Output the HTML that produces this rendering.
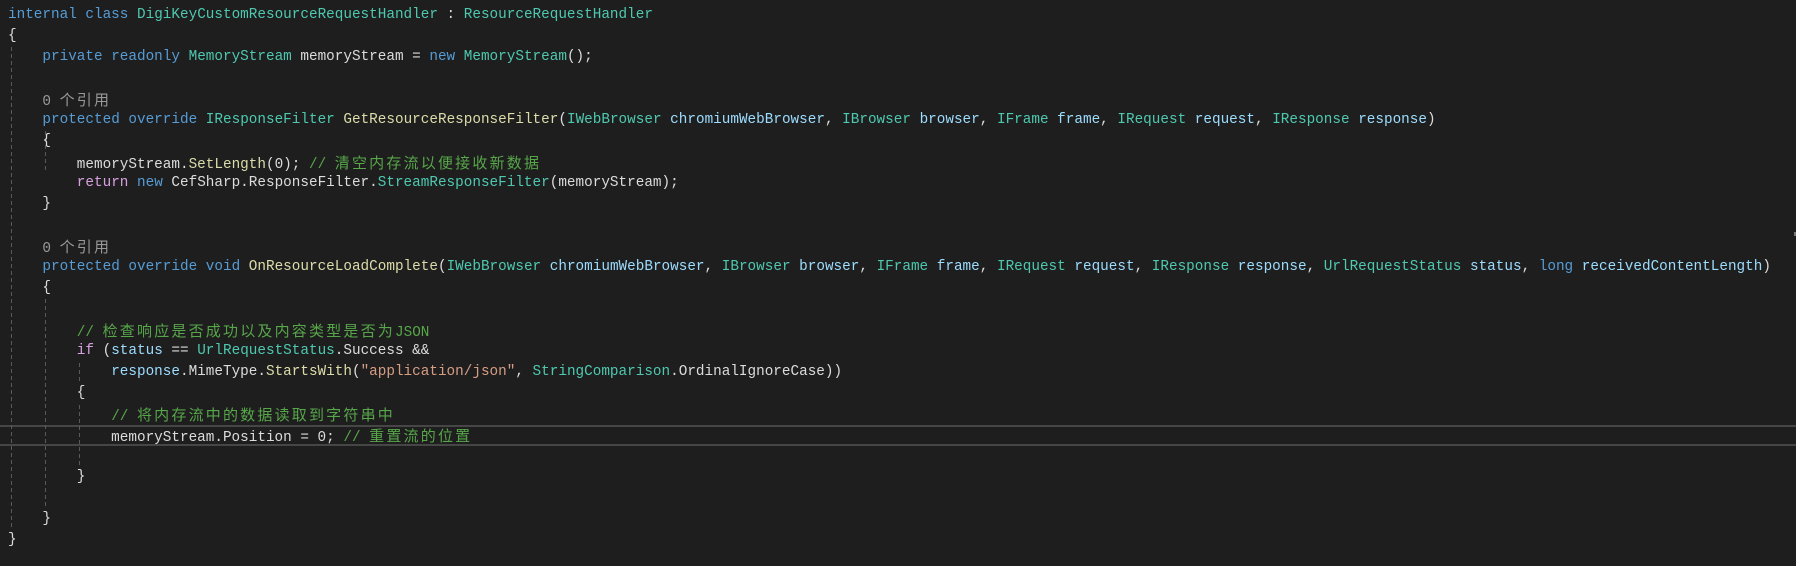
<!DOCTYPE html>
<html><head><meta charset="utf-8"><style>
html,body{margin:0;padding:0;background:#1e1e1e;width:1796px;height:566px;overflow:hidden;position:relative}
.l{position:absolute;left:8px;height:21px;line-height:21px;white-space:pre;font-family:"Liberation Mono","Noto Sans CJK SC",monospace;font-size:14.33px;color:#dcdcdc}
.c{font-family:"Noto Sans CJK SC","WenQuanYi Zen Hei",sans-serif;font-size:15px;letter-spacing:2.2px}
.k{color:#569cd6}.t{color:#4ec9b0}.m{color:#dcdcaa}.p{color:#9cdcfe}.g{color:#57a64a}.s{color:#d69d85}.f{color:#d8a0df}.r{color:#999999}
.gd{position:absolute;width:1px;background:repeating-linear-gradient(to bottom,#5a5a5a 0 4px,transparent 4px 7px)}
.hl{position:absolute;left:0;width:1796px;top:425px;height:17px;border-top:2px solid #464646;border-bottom:2px solid #464646}
</style></head><body>
<div class="hl"></div>
<div class="gd" style="left:11px;top:47px;height:480px"></div>
<div class="gd" style="left:45px;top:131px;height:42px"></div>
<div class="gd" style="left:45px;top:299px;height:210px"></div>
<div class="gd" style="left:79px;top:363px;height:20px"></div>
<div class="gd" style="left:79px;top:405px;height:62px"></div>
<div style="position:absolute;left:1794px;top:232px;width:2px;height:4px;background:#777"></div>

<div class="l" style="top:5px"><span class="k">internal class</span> <span class="t">DigiKeyCustomResourceRequestHandler</span> : <span class="t">ResourceRequestHandler</span></div>
<div class="l" style="top:26px">{</div>
<div class="l" style="top:47px">    <span class="k">private readonly</span> <span class="t">MemoryStream</span> memoryStream = <span class="k">new</span> <span class="t">MemoryStream</span>();</div>
<div class="l r" style="top:89px">    0 <span class="c">个引用</span></div>
<div class="l" style="top:110px">    <span class="k">protected override</span> <span class="t">IResponseFilter</span> <span class="m">GetResourceResponseFilter</span>(<span class="t">IWebBrowser</span> <span class="p">chromiumWebBrowser</span>, <span class="t">IBrowser</span> <span class="p">browser</span>, <span class="t">IFrame</span> <span class="p">frame</span>, <span class="t">IRequest</span> <span class="p">request</span>, <span class="t">IResponse</span> <span class="p">response</span>)</div>
<div class="l" style="top:131px">    {</div>
<div class="l" style="top:152px">        memoryStream.<span class="m">SetLength</span>(0); <span class="g">// <span class="c">清空内存流以便接收新数据</span></span></div>
<div class="l" style="top:173px">        <span class="f">return</span> <span class="k">new</span> CefSharp.ResponseFilter.<span class="t">StreamResponseFilter</span>(memoryStream);</div>
<div class="l" style="top:194px">    }</div>
<div class="l r" style="top:236px">    0 <span class="c">个引用</span></div>
<div class="l" style="top:257px">    <span class="k">protected override void</span> <span class="m">OnResourceLoadComplete</span>(<span class="t">IWebBrowser</span> <span class="p">chromiumWebBrowser</span>, <span class="t">IBrowser</span> <span class="p">browser</span>, <span class="t">IFrame</span> <span class="p">frame</span>, <span class="t">IRequest</span> <span class="p">request</span>, <span class="t">IResponse</span> <span class="p">response</span>, <span class="t">UrlRequestStatus</span> <span class="p">status</span>, <span class="k">long</span> <span class="p">receivedContentLength</span>)</div>
<div class="l" style="top:278px">    {</div>
<div class="l" style="top:320px">        <span class="g">// <span class="c">检查响应是否成功以及内容类型是否为</span>JSON</span></div>
<div class="l" style="top:341px">        <span class="f">if</span> (<span class="p">status</span> == <span class="t">UrlRequestStatus</span>.Success &amp;&amp;</div>
<div class="l" style="top:362px">            <span class="p">response</span>.MimeType.<span class="m">StartsWith</span>(<span class="s">"application/json"</span>, <span class="t">StringComparison</span>.OrdinalIgnoreCase))</div>
<div class="l" style="top:383px">        {</div>
<div class="l" style="top:404px">            <span class="g">// <span class="c">将内存流中的数据读取到字符串中</span></span></div>
<div class="l" style="top:425px">            memoryStream.Position = 0; <span class="g">// <span class="c">重置流的位置</span></span></div>
<div class="l" style="top:467px">        }</div>
<div class="l" style="top:509px">    }</div>
<div class="l" style="top:530px">}</div>
</body></html>
